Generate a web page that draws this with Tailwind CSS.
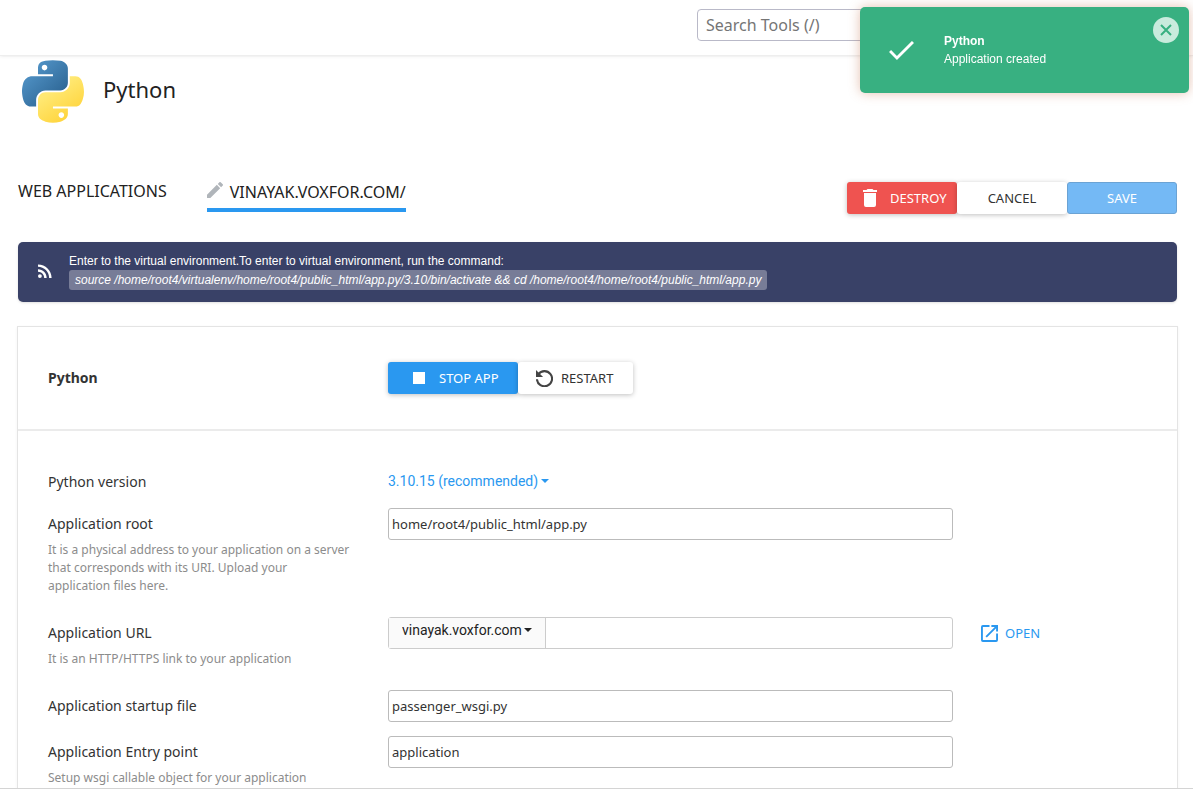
<!DOCTYPE html>
<html lang="en">
<head>
    <meta charset="UTF-8">
    <meta name="viewport" content="width=device-width, initial-scale=1.0">
    <script src="https://cdn.jsdelivr.net/npm/@tailwindcss/browser@4"></script>
    <title>Python</title>
</head>
<body class="flex h-screen flex-col overflow-hidden border-b border-[#d4d4d4] bg-white font-['Noto_Sans',sans-serif] text-sm text-[#333]">
    <!-- Top bar -->
    <header class="flex h-14 shrink-0 items-start justify-end border-b border-[#eee] pt-[9px] pr-[205px] shadow-sm shadow-black/5">
        <input type="search" aria-label="Search Tools" placeholder="Search Tools (/)"
            class="h-8 w-[291px] rounded border border-[#b9b9c8] bg-white px-2 text-base placeholder:text-[#757575]">
    </header>

    <main class="min-h-0 flex-1 overflow-hidden pr-[15px] pl-4">
        <div class="flex h-[70px] items-center gap-[19px] pl-1.5">
            <svg class="h-[63px] w-[62px]" viewBox="0 0 111.2 112.4" aria-hidden="true">
                <defs>
                    <linearGradient id="blue" x1="0" y1="0" x2="0.75" y2="0.8">
                        <stop offset="0" stop-color="#5a9fd4"/>
                        <stop offset="1" stop-color="#306998"/>
                    </linearGradient>
                    <linearGradient id="yellow" x1="0.8" y1="0.85" x2="0.4" y2="0.25">
                        <stop offset="0" stop-color="#ffd43b"/>
                        <stop offset="1" stop-color="#ffe873"/>
                    </linearGradient>
                </defs>
                <path fill="url(#blue)" d="M54.92 0C50.34.02 45.96.41 42.11 1.09 30.76 3.1 28.7 7.29 28.7 15.03v10.22h26.81v3.41H18.64c-7.79 0-14.62 4.68-16.75 13.59-2.46 10.21-2.57 16.59 0 27.25 1.91 7.94 6.46 13.59 14.25 13.59h9.22V70.84c0-8.85 7.65-16.65 16.75-16.65h26.78c7.45 0 13.4-6.14 13.4-13.63V15.03c0-7.26-6.13-12.72-13.4-13.94C64.28.33 59.5-.02 54.92 0zM40.42 8.22c2.77 0 5.03 2.3 5.03 5.12 0 2.82-2.26 5.1-5.03 5.1-2.78 0-5.03-2.28-5.03-5.1 0-2.82 2.25-5.12 5.03-5.12z"/>
                <path fill="url(#yellow)" d="M85.64 28.66v11.9c0 9.23-7.83 17-16.75 17H42.11c-7.34 0-13.41 6.28-13.41 13.63v25.53c0 7.27 6.32 11.54 13.41 13.62 8.48 2.5 16.62 2.95 26.78 0 6.75-1.95 13.4-5.88 13.4-13.62V86.5H55.51v-3.41H95.7c7.79 0 10.7-5.43 13.41-13.59 2.8-8.4 2.68-16.48 0-27.25-1.93-7.76-5.61-13.59-13.41-13.59zM70.58 93.31c2.77 0 5.03 2.28 5.03 5.1 0 2.82-2.26 5.12-5.03 5.12-2.78 0-5.04-2.3-5.04-5.12 0-2.82 2.26-5.1 5.04-5.1z"/>
            </svg>
            <h1 class="pb-0.5 text-[22px] text-[#222]">Python</h1>
        </div>

        <!-- Tabs and page actions -->
        <div class="mt-[55px] mr-px flex h-[33px] items-start justify-between pl-0.5">
            <nav class="flex gap-10 text-base text-[#222]">
                <a href="#" class="leading-5">WEB APPLICATIONS</a>
                <a href="#" class="flex h-[31px] gap-[7px] border-b-4 border-[#2a98f0] leading-[22px]">
                    <svg class="mt-px h-4 w-4" viewBox="3 3 18 18" fill="#b0b5ba" aria-hidden="true">
                        <path d="M3 17.25V21h3.75L17.81 9.94l-3.75-3.75L3 17.25zM20.71 7.04a1 1 0 0 0 0-1.41l-2.34-2.34a1 1 0 0 0-1.41 0l-1.83 1.83 3.75 3.75 1.83-1.83z"/>
                    </svg>
                    VINAYAK.VOXFOR.COM/
                </a>
            </nav>
            <div class="flex self-end text-[13px]">
                <button type="button" class="flex h-8 w-[110px] items-center gap-[13px] rounded-[3px] bg-[#ef5350] pl-4 text-white shadow-[0_1px_5px_rgba(0,0,0,0.25)]">
                    <svg class="h-[18px] w-3.5" viewBox="5 3 14 18" fill="currentColor" aria-hidden="true">
                        <path d="M6 19a2 2 0 0 0 2 2h8a2 2 0 0 0 2-2V7H6v12zM19 4h-3.5l-1-1h-5l-1 1H5v2h14V4z"/>
                    </svg>
                    DESTROY
                </button>
                <button type="button" class="h-8 w-[110px] rounded-[3px] bg-white shadow-[0_1px_5px_rgba(0,0,0,0.25)]">CANCEL</button>
                <button type="button" class="h-8 w-[110px] rounded-[3px] border border-[#6ba3d4] bg-[#74b9f5] text-white">SAVE</button>
            </div>
        </div>

        <!-- Virtual environment hint -->
        <section class="mt-7 mr-px ml-0.5 flex h-[60px] gap-[17px] rounded-[5px] bg-[#394167] pt-[11px] pl-5 font-['Liberation_Sans',sans-serif] text-xs leading-4 text-white shadow-sm">
            <svg class="mt-[11px] h-3.5 w-3.5" viewBox="4 4 16 16" fill="currentColor" aria-hidden="true">
                <circle cx="6.18" cy="17.82" r="2.18"/>
                <path d="M4 4.44v2.83c7.03 0 12.73 5.7 12.73 12.73h2.83C19.56 11.41 12.59 4.44 4 4.44zm0 5.66v2.83c3.9 0 7.07 3.17 7.07 7.07h2.83c0-5.47-4.43-9.9-9.9-9.9z"/>
            </svg>
            <div>
                <p class="mb-px">Enter to the virtual environment.To enter to virtual environment, run the command:</p>
                <code class="block w-fit rounded-[3px] bg-[#777c97] px-1.5 py-0.5 font-['Liberation_Sans',sans-serif] italic">source /home/root4/virtualenv/home/root4/public_html/app.py/3.10/bin/activate &amp;&amp; cd /home/root4/home/root4/public_html/app.py</code>
            </div>
        </section>

        <!-- Application settings -->
        <form class="ml-px mt-6 h-[600px] border border-[#e4e4e4] shadow-sm shadow-black/5">
            <div class="grid h-[104px] grid-cols-[340fr_759fr] items-center border-b-2 border-[#ebebeb] px-[30px]">
                <h2 class="font-bold">Python</h2>
                <div class="flex text-[13px]">
                    <button type="button" class="flex h-8 w-[130px] items-center gap-3.5 rounded-[3px] bg-[#2a98f0] pl-[25px] text-white shadow-[0_1px_5px_rgba(0,0,0,0.25)]">
                        <span class="h-3 w-3 bg-white"></span>
                        STOP APP
                    </button>
                    <button type="button" class="flex h-8 w-[115px] items-center gap-2 rounded-[3px] bg-white pl-[18px] shadow-[0_1px_5px_rgba(0,0,0,0.25)]">
                        <svg class="h-[17px] w-[17px]" viewBox="3 3 18 18" fill="none" stroke="#444" stroke-width="2.2" aria-hidden="true">
                            <path d="M5.5 7.5A8 8 0 1 1 4 12.8"/>
                            <path fill="#444" stroke="none" d="M3 3v7.5h7.5z"/>
                        </svg>
                        RESTART
                    </button>
                </div>
            </div>

            <div class="px-[30px] pt-[35px]">
                <div class="mb-2.5 grid grid-cols-[340fr_565fr_194fr]">
                    <label for="version" class="leading-8">Python version</label>
                    <div class="flex h-8 items-center gap-0.5 pb-0.5 font-['Roboto',sans-serif] text-[#2a98f0]">
                        <select id="version" class="appearance-none">
                            <option>3.10.15 (recommended)</option>
                        </select>
                        <svg class="h-1 w-2" viewBox="0 0 8 4" fill="currentColor" aria-hidden="true"><path d="M0 0h8L4 4z"/></svg>
                    </div>
                </div>

                <div class="mb-[22px] grid grid-cols-[340fr_565fr_194fr]">
                    <div>
                        <label for="root" class="mb-px block leading-8">Application root</label>
                        <p class="text-xs leading-[18px] text-[#8c8c8c]">It is a physical address to your application on a server<br>that corresponds with its URI. Upload your<br>application files here.</p>
                    </div>
                    <input id="root" type="text" value="home/root4/public_html/app.py" class="h-8 rounded-[3px] border border-[#bbb] px-[3px] text-[13px]">
                </div>

                <div class="mb-[22px] grid grid-cols-[340fr_565fr_194fr]">
                    <div>
                        <label for="path" class="mb-px block leading-8">Application URL</label>
                        <p class="text-xs leading-[18px] text-[#8c8c8c]">It is an HTTP/HTTPS link to your application</p>
                    </div>
                    <div class="flex h-8 rounded-[3px] border border-[#ccc]">
                        <div class="flex items-center gap-0.5 border-r border-[#ccc] bg-[#fafafa] pr-[13px] pb-1.5 pl-[13px] font-['Roboto',sans-serif] text-[#222]">
                            <select aria-label="Domain" class="appearance-none">
                                <option>vinayak.voxfor.com</option>
                            </select>
                            <svg class="h-1 w-2" viewBox="0 0 8 4" fill="currentColor" aria-hidden="true"><path d="M0 0h8L4 4z"/></svg>
                        </div>
                        <input id="path" type="text" class="min-w-0 flex-1 px-[3px] text-[13px]">
                    </div>
                    <a href="#" class="ml-7 flex h-8 items-center gap-[7px] text-[13px] text-[#2a98f0]">
                        <svg class="h-[17px] w-[17px]" viewBox="3 3 18 18" fill="currentColor" aria-hidden="true">
                            <path d="M19 19H5V5h7V3H5a2 2 0 0 0-2 2v14a2 2 0 0 0 2 2h14a2 2 0 0 0 2-2v-7h-2v7zM14 3v2h3.59l-9.83 9.83 1.41 1.41L19 6.41V10h2V3h-7z"/>
                        </svg>
                        OPEN
                    </a>
                </div>

                <div class="mb-3.5 grid grid-cols-[340fr_565fr_194fr]">
                    <label for="startup" class="leading-8">Application startup file</label>
                    <input id="startup" type="text" value="passenger_wsgi.py" class="h-8 rounded-[3px] border border-[#bbb] px-[3px] text-[13px]">
                </div>

                <div class="grid grid-cols-[340fr_565fr_194fr]">
                    <div>
                        <label for="entry" class="mb-px block leading-8">Application Entry point</label>
                        <p class="text-xs leading-[18px] text-[#8c8c8c]">Setup wsgi callable object for your application</p>
                    </div>
                    <input id="entry" type="text" value="application" class="h-8 rounded-[3px] border border-[#bbb] px-[3px] text-[13px]">
                </div>
            </div>
        </form>
    </main>

    <!-- Toast -->
    <div role="status" class="fixed top-[7px] right-1 flex h-[86px] w-[329px] items-center rounded-[5px] bg-[#38b081] pl-[29px] font-['Liberation_Sans',sans-serif] text-xs leading-[18px] text-white shadow-[0_0_12px_rgba(190,100,60,0.4)]">
        <svg class="h-[19px] w-[25px]" viewBox="3.4 5.6 17.6 13.4" fill="currentColor" aria-hidden="true">
            <path d="M9 16.17 4.83 12l-1.42 1.41L9 19 21 7l-1.41-1.41z"/>
        </svg>
        <div class="ml-[30px]">
            <p class="font-bold">Python</p>
            <p>Application created</p>
        </div>
        <button type="button" aria-label="Close" class="absolute top-2.5 right-2.5 flex h-[26px] w-[26px] items-center justify-center rounded-full bg-[#c9ebdd] text-[#38b081]">
            <svg class="h-3 w-3" viewBox="0 0 12 12" fill="none" stroke="currentColor" stroke-width="2" aria-hidden="true"><path d="M1 1l10 10M11 1L1 11"/></svg>
        </button>
    </div>
</body>
</html>
